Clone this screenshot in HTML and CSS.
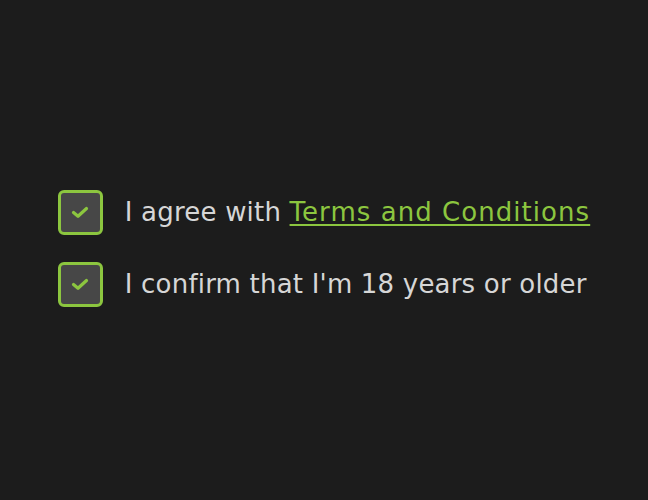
FILE: index.html
```html
<!DOCTYPE html>
<html lang="en">
<head>
<meta charset="utf-8">
<title>Consent</title>
<link rel="stylesheet" href="styles.css">
</head>
<body>
<main class="stack">
  <label class="row">
    <span class="box"><svg class="tick" viewBox="0 0 18 13" width="18" height="13"><path d="M2.5 6.5 L7 10.3 L15.5 2.5" fill="none" stroke="#8cc63f" stroke-width="3.2" stroke-linecap="round" stroke-linejoin="round"/></svg></span>
    <span class="text">I agree with <a class="link" href="#">Terms and Conditions</a></span>
  </label>
  <label class="row">
    <span class="box"><svg class="tick" viewBox="0 0 18 13" width="18" height="13"><path d="M2.5 6.5 L7 10.3 L15.5 2.5" fill="none" stroke="#8cc63f" stroke-width="3.2" stroke-linecap="round" stroke-linejoin="round"/></svg></span>
    <span class="text">I confirm that I'm 18 years or older</span>
  </label>
</main>
</body>
</html>
```
FILE: styles.css
```css
html, body {
  margin: 0;
  height: 100%;
}
body {
  background: #1c1c1c;
  display: flex;
  align-items: center;
  justify-content: center;
  font-family: "DejaVu Sans", "Open Sans", sans-serif;
}
.stack {
  display: flex;
  flex-direction: column;
  gap: 27px;
  margin-top: -4px;
}
.row {
  display: flex;
  align-items: center;
  gap: 22px;
}
.box {
  box-sizing: border-box;
  width: 45px;
  height: 45px;
  border: 3px solid #8cc63f;
  border-radius: 6px;
  background: #474747;
  display: flex;
  align-items: center;
  justify-content: center;
}
.tick {
  display: block;
}
.text {
  color: #d6d6d6;
  font-size: 26px;
  letter-spacing: 0.2px;
}
.link {
  color: #8cc63f;
  letter-spacing: 1.05px;
  text-decoration: underline;
  text-decoration-thickness: 2px;
  text-underline-offset: 3px;
}
```
